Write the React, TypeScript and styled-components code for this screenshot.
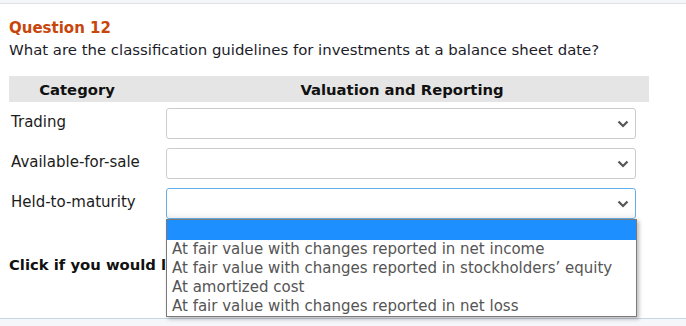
import React from "react";
import styled, { createGlobalStyle } from "styled-components";

const Global = createGlobalStyle`
  html, body { margin: 0; padding: 0; background: #ffffff; }
  body { font-family: Verdana, "DejaVu Sans", sans-serif; width: 686px; height: 326px; overflow: hidden; }
`;

const Page = styled.div`
  width: 686px;
  height: 326px;
  display: flex;
  flex-direction: column;
  background: #f4f6f9;
`;

const Sheet = styled.div`
  background: #ffffff;
  margin-top: 3px;
  border-top: 1px solid #dde3ea;
  border-bottom: 1px solid #c9d6e5;
  height: 316px;
  padding: 0 9px;
  box-sizing: border-box;
  position: relative;
`;

const Title = styled.div`
  color: #c8460c;
  font-weight: bold;
  font-size: 15px;
  line-height: 18px;
  margin-top: 15px;
`;

const Prompt = styled.div`
  color: #1c1c2a;
  font-size: 14.9px;
  line-height: 18px;
  margin-top: 4px;
`;

const HeaderBand = styled.div`
  margin-top: 17px;
  width: 640px;
  height: 26px;
  background: #e5e5e5;
  display: grid;
  grid-template-columns: 136px 1fr;
  align-items: center;
  font-weight: bold;
  font-size: 14.8px;
  color: #111;
`;

const HeadCell = styled.div<{ $pad?: number }>`
  text-align: center;
  padding-left: ${(p) => p.$pad ?? 0}px;
`;

const Rows = styled.div`
  display: flex;
  flex-direction: column;
  gap: 9px;
  margin-top: 6px;
`;

const Row = styled.div`
  display: grid;
  grid-template-columns: 157px 470px;
  align-items: start;
`;

const Label = styled.div`
  font-size: 15px;
  color: #1c1c1c;
  padding-left: 2px;
  padding-top: 5px;
  line-height: 18px;
`;

const SelectBox = styled.div<{ $focus?: boolean }>`
  position: relative;
  height: 31px;
  box-sizing: border-box;
  border: 1px solid ${(p) => (p.$focus ? "#66aee8" : "#cccccc")};
  border-radius: 3px;
  background: #fff;
  box-shadow: ${(p) => (p.$focus ? "inset 0 -6px 8px -6px rgba(0,0,0,0.12)" : "none")};
  display: flex;
  align-items: center;
  justify-content: flex-end;
  padding-right: 4px;
`;

const Chevron = styled.svg`
  width: 12px;
  height: 8px;
  margin-right: 2px;
`;

const ListBox = styled.div`
  position: absolute;
  left: -1px;
  top: 30px;
  width: 469px;
  background: #ffffff;
  border: 1px solid #7a7a7a;
  box-shadow: 2px 2px 4px rgba(0, 0, 0, 0.28);
  z-index: 5;
`;

const Option = styled.div<{ $active?: boolean }>`
  height: ${(p) => (p.$active ? 20 : 19)}px;
  line-height: 19px;
  font-size: 15px;
  padding-left: 5px;
  color: #555;
  background: ${(p) => (p.$active ? "#1e8fff" : "#fff")};
  white-space: nowrap;
`;

const Footer = styled.div`
  margin-top: 37px;
  font-size: 14.8px;
  font-weight: bold;
  color: #111;
  line-height: 18px;
`;

const Arrow = () => (
  <Chevron viewBox="0 0 12 8">
    <path d="M1.5 1.5 L6 6 L10.5 1.5" fill="none" stroke="#555" strokeWidth="2.2" />
  </Chevron>
);

const options = [
  "At fair value with changes reported in net income",
  "At fair value with changes reported in stockholders\u2019 equity",
  "At amortized cost",
  "At fair value with changes reported in net loss",
];

export default function App() {
  return (
    <Page>
      <Global />
      <Sheet>
        <Title>Question 12</Title>
        <Prompt>What are the classification guidelines for investments at a balance sheet date?</Prompt>
        <HeaderBand>
          <HeadCell>Category</HeadCell>
          <HeadCell $pad={10}>Valuation and Reporting</HeadCell>
        </HeaderBand>
        <Rows>
          <Row>
            <Label>Trading</Label>
            <SelectBox>
              <Arrow />
            </SelectBox>
          </Row>
          <Row>
            <Label>Available-for-sale</Label>
            <SelectBox>
              <Arrow />
            </SelectBox>
          </Row>
          <Row>
            <Label>Held-to-maturity</Label>
            <SelectBox $focus>
              <Arrow />
              <ListBox>
                <Option $active />
                {options.map((o) => (
                  <Option key={o}>{o}</Option>
                ))}
              </ListBox>
            </SelectBox>
          </Row>
        </Rows>
        <Footer>Click if you would like to Show Work for this question:</Footer>
      </Sheet>
    </Page>
  );
}
